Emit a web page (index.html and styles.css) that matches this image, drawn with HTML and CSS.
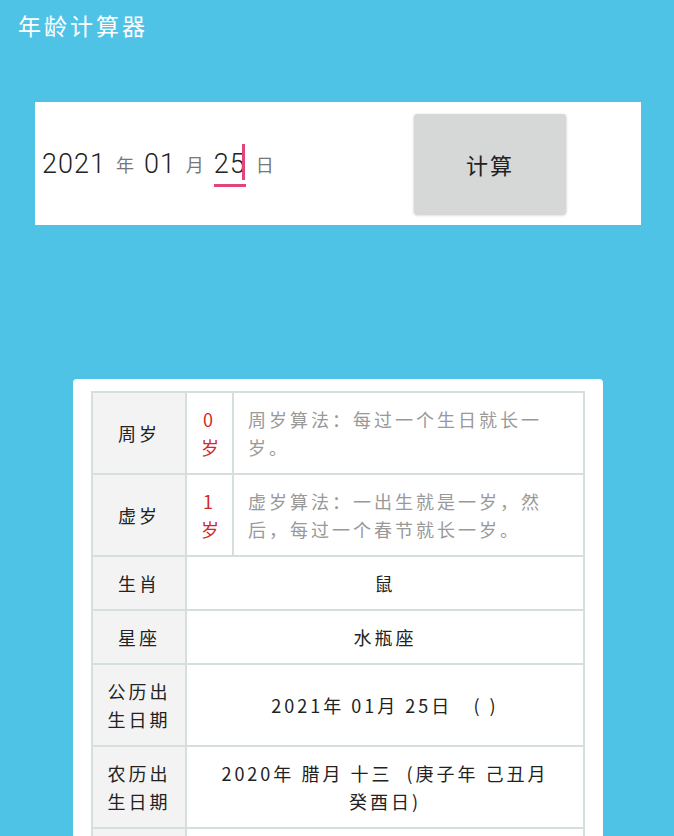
FILE: index.html
```html
<!doctype html>
<html lang="zh-CN">
  <head>
    <meta charset="utf-8">
    <title>年龄计算器</title>
    <link rel="stylesheet" href="styles.css">
  </head>
  <body>
    <h1 class="title">年龄计算器</h1>

    <div class="form">
      <div class="date">
        <span class="num">2021</span>
        <span class="unit">年</span>
        <span class="num">01</span>
        <span class="unit">月</span>
        <span class="num active">25<i class="cursor"></i></span>
        <span class="unit">日</span>
      </div>
      <button class="calc">计算</button>
    </div>

    <div class="card">
      <table class="result">
        <colgroup>
          <col class="c1">
          <col class="c2">
          <col class="c3">
        </colgroup>
        <tr class="tall">
          <th>周岁</th>
          <td class="age">0岁</td>
          <td class="note">周岁算法：每过一个生日就长一岁。</td>
        </tr>
        <tr class="tall">
          <th>虚岁</th>
          <td class="age">1岁</td>
          <td class="note">虚岁算法：一出生就是一岁，然后，每过一个春节就长一岁。</td>
        </tr>
        <tr>
          <th>生肖</th>
          <td colspan="2" class="val">鼠</td>
        </tr>
        <tr>
          <th>星座</th>
          <td colspan="2" class="val">水瓶座</td>
        </tr>
        <tr class="tall">
          <th>公历出生日期</th>
          <td colspan="2" class="val">2021年 01月 25日 &nbsp;&nbsp;( )</td>
        </tr>
        <tr class="tall">
          <th>农历出生日期</th>
          <td colspan="2" class="val">2020年 腊月 十三 &nbsp;(庚子年 己丑月 癸酉日)</td>
        </tr>
        <tr class="tall">
          <th></th>
          <td colspan="2" class="val"></td>
        </tr>
      </table>
    </div>
  </body>
</html>
```

FILE: styles.css
```css
body {
    margin: 0;
    background: #4fc3e6;
    font-family: "Noto Sans CJK SC", "Noto Sans", sans-serif;
    color: #222;
}

.title {
    margin: 0;
    padding: 8px 18px 0;
    height: 102px;
    box-sizing: border-box;
    font-size: 23px;
    font-weight: normal;
    letter-spacing: 3px;
    color: #fff;
    line-height: 34px;
}

.form {
    display: flex;
    align-items: center;
    margin: 0 33px 0 35px;
    height: 123px;
    padding-left: 7px;
    background: #fff;
}

.date {
    display: flex;
    align-items: center;
    gap: 10px;
}

.num {
    position: relative;
    font-family: Roboto, sans-serif;
    font-weight: 300;
    font-size: 27px;
    color: #222;
    letter-spacing: 1px;
}

.unit {
    font-size: 18px;
    color: #777;
}

.active {
    padding-bottom: 4px;
    border-bottom: 3px solid #e0457b;
    margin-bottom: -7px;
}

.cursor {
    position: absolute;
    right: 1px;
    top: -4px;
    width: 3px;
    height: 36px;
    background: #e0457b;
}

.calc {
    margin-left: auto;
    margin-right: 75px;
    width: 152px;
    height: 100px;
    border: 0;
    border-radius: 3px;
    background: #d6d7d7;
    box-shadow: 0 1px 3px rgba(0, 0, 0, 0.25);
    font-family: "Noto Sans CJK SC", sans-serif;
    font-size: 22px;
    letter-spacing: 2px;
    color: #222;
}

.card {
    margin: 154px 71px 0 73px;
    padding: 12px 18px;
    background: #fff;
    border-radius: 4px;
}

.result {
    width: 494px;
    table-layout: fixed;
    border-collapse: collapse;
    font-size: 18px;
    letter-spacing: 3px;
}

.c1 {
    width: 94px;
}

.c2 {
    width: 47px;
}

.result th,
.result td {
    border: 2px solid #d4e0d9;
    line-height: 28px;
    text-align: center;
}

.result th {
    padding: 0 12px;
    background: #f3f3f3;
    font-weight: normal;
    color: #222;
}

.result tr {
    height: 54px;
}

.result tr.tall {
    height: 82px;
}

.age {
    padding: 0 14px;
    color: #d02a2a;
    word-break: break-all;
}

.result td.note {
    padding: 0 36px 0 14px;
    text-align: left;
    color: #999;
}

.val {
    padding: 0 28px;
    color: #222;
}
```
